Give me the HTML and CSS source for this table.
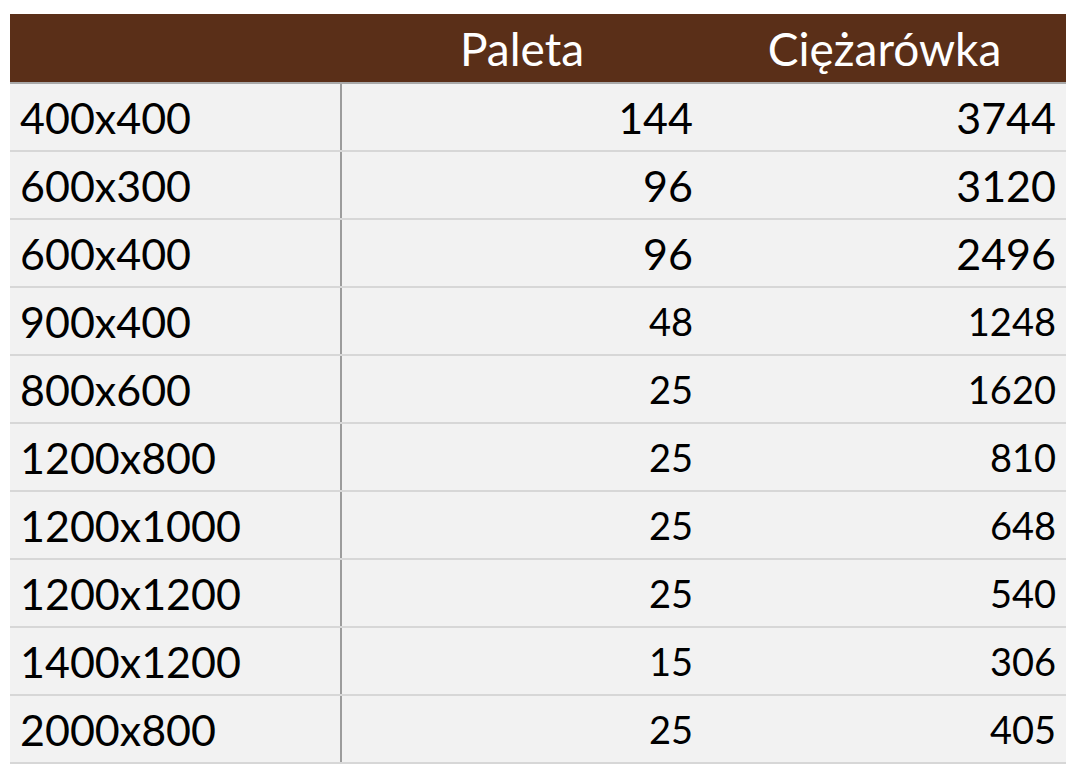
FILE: index.html
```html
<!DOCTYPE html>
<html lang="pl">
<head>
<meta charset="utf-8">
<title>Paleta / Ciężarówka</title>
<link rel="stylesheet" href="styles.css">
</head>
<body>
<table class="sheet">
  <colgroup>
    <col class="c-label">
    <col class="c-pal">
    <col class="c-truck">
  </colgroup>
  <thead>
    <tr>
      <th></th>
      <th>Paleta</th>
      <th>Ciężarówka</th>
    </tr>
  </thead>
  <tbody>
    <tr class="big"><td class="label">400x400</td><td class="num">144</td><td class="num">3744</td></tr>
    <tr class="big"><td class="label">600x300</td><td class="num">96</td><td class="num">3120</td></tr>
    <tr class="big"><td class="label">600x400</td><td class="num">96</td><td class="num">2496</td></tr>
    <tr><td class="label">900x400</td><td class="num">48</td><td class="num">1248</td></tr>
    <tr><td class="label">800x600</td><td class="num">25</td><td class="num">1620</td></tr>
    <tr><td class="label">1200x800</td><td class="num">25</td><td class="num">810</td></tr>
    <tr><td class="label">1200x1000</td><td class="num">25</td><td class="num">648</td></tr>
    <tr><td class="label">1200x1200</td><td class="num">25</td><td class="num">540</td></tr>
    <tr><td class="label">1400x1200</td><td class="num">15</td><td class="num">306</td></tr>
    <tr><td class="label">2000x800</td><td class="num">25</td><td class="num">405</td></tr>
  </tbody>
</table>
</body>
</html>
```

FILE: styles.css
```css
html, body {
  margin: 0;
  padding: 0;
  background: #ffffff;
}

body {
  font-family: Lato, "Open Sans", "Liberation Sans", sans-serif;
  color: #000;
}

.sheet {
  margin: 14px 0 0 10px;
  width: 1056px;
  border-collapse: collapse;
  table-layout: fixed;
}

.c-label { width: 331px; }
.c-pal { width: 362px; }
.c-truck { width: 363px; }

.sheet th {
  height: 68px;
  padding: 0;
  background: #5a2f18;
  color: #ffffff;
  font-size: 46px;
  font-weight: 400;
  text-align: center;
  vertical-align: middle;
  border-bottom: 2px solid #a9a9a9;
}

.sheet td {
  height: 66px;
  padding: 0 10px;
  background: #f2f2f2;
  border-bottom: 2px solid #d7d7d7;
  vertical-align: middle;
  line-height: 1;
}

.sheet td.label {
  border-right: 2px solid #9c9c9c;
  font-size: 43px;
}

.sheet td.num {
  text-align: right;
  font-size: 38px;
}

.sheet tr.big td.num {
  font-size: 43px;
}
```
